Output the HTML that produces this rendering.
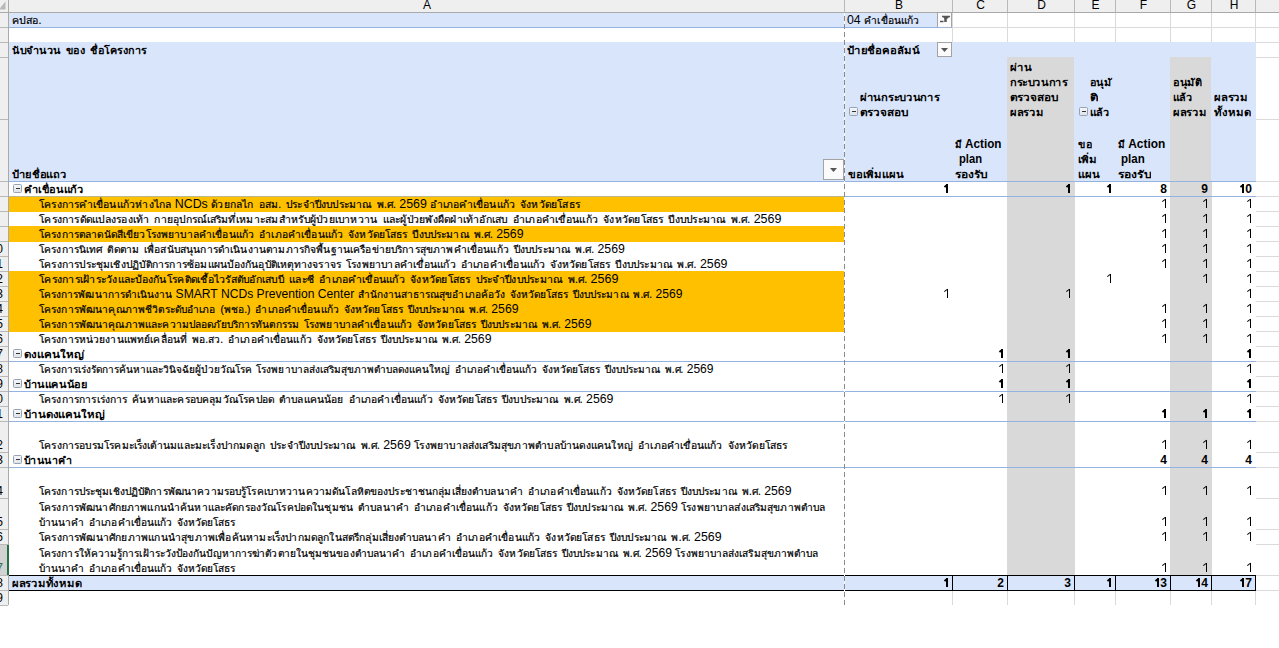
<!DOCTYPE html><html><head><meta charset="utf-8"><style>
*{margin:0;padding:0}
html,body{width:1279px;height:648px;overflow:hidden;background:#fff}
body{position:relative;font-family:"Liberation Sans",sans-serif;color:#000}
.r{position:absolute}
.t{position:absolute;white-space:nowrap;line-height:15px;font-size:12px;transform-origin:0 0}
.t.b{font-weight:bold}
.th{-webkit-text-stroke:0.2px #000;word-spacing:2px}
.b .th{-webkit-text-stroke:0}
.la{font-size:12px}
.ch{font-size:12px}
.rn{font-size:12px;text-align:right;line-height:15px}
.o{color:transparent;position:relative}
.o:before{content:"";position:absolute;left:4.4px;top:2px;width:1.2px;height:9px;background:#000}
.o:after{content:"";position:absolute;left:1.6px;top:3.2px;width:3.6px;height:1.1px;background:#000;transform:rotate(-36deg);transform-origin:50% 50%}
.b .o:before{left:3.7px;width:2px}
.b .o:after{left:1.3px;top:3.4px;width:3.4px;height:1.7px}
.mb{width:7px;height:7px;border:1px solid #97a3b3;border-radius:1.5px;background:linear-gradient(#f4f6f9,#dfe4ea)}
.mb:after{content:"";position:absolute;left:1.5px;top:3px;width:4px;height:1px;background:#333}
</style></head><body><div class="r" style="left:9px;top:27px;width:1270px;height:1px;background:#dadada;"></div>
<div class="r" style="left:9px;top:42px;width:1270px;height:1px;background:#dadada;"></div>
<div class="r" style="left:9px;top:57px;width:1270px;height:1px;background:#dadada;"></div>
<div class="r" style="left:9px;top:119px;width:1270px;height:1px;background:#dadada;"></div>
<div class="r" style="left:9px;top:181px;width:1270px;height:1px;background:#dadada;"></div>
<div class="r" style="left:9px;top:196px;width:1270px;height:1px;background:#dadada;"></div>
<div class="r" style="left:9px;top:211px;width:1270px;height:1px;background:#dadada;"></div>
<div class="r" style="left:9px;top:226px;width:1270px;height:1px;background:#dadada;"></div>
<div class="r" style="left:9px;top:241px;width:1270px;height:1px;background:#dadada;"></div>
<div class="r" style="left:9px;top:256px;width:1270px;height:1px;background:#dadada;"></div>
<div class="r" style="left:9px;top:271px;width:1270px;height:1px;background:#dadada;"></div>
<div class="r" style="left:9px;top:286px;width:1270px;height:1px;background:#dadada;"></div>
<div class="r" style="left:9px;top:301px;width:1270px;height:1px;background:#dadada;"></div>
<div class="r" style="left:9px;top:316px;width:1270px;height:1px;background:#dadada;"></div>
<div class="r" style="left:9px;top:331px;width:1270px;height:1px;background:#dadada;"></div>
<div class="r" style="left:9px;top:346px;width:1270px;height:1px;background:#dadada;"></div>
<div class="r" style="left:9px;top:361px;width:1270px;height:1px;background:#dadada;"></div>
<div class="r" style="left:9px;top:376px;width:1270px;height:1px;background:#dadada;"></div>
<div class="r" style="left:9px;top:391px;width:1270px;height:1px;background:#dadada;"></div>
<div class="r" style="left:9px;top:406px;width:1270px;height:1px;background:#dadada;"></div>
<div class="r" style="left:9px;top:421px;width:1270px;height:1px;background:#dadada;"></div>
<div class="r" style="left:9px;top:452px;width:1270px;height:1px;background:#dadada;"></div>
<div class="r" style="left:9px;top:467px;width:1270px;height:1px;background:#dadada;"></div>
<div class="r" style="left:9px;top:498px;width:1270px;height:1px;background:#dadada;"></div>
<div class="r" style="left:9px;top:529px;width:1270px;height:1px;background:#dadada;"></div>
<div class="r" style="left:9px;top:544px;width:1270px;height:1px;background:#dadada;"></div>
<div class="r" style="left:9px;top:575px;width:1270px;height:1px;background:#dadada;"></div>
<div class="r" style="left:9px;top:590px;width:1270px;height:1px;background:#dadada;"></div>
<div class="r" style="left:844px;top:13px;width:1px;height:592px;background:#dadada;"></div>
<div class="r" style="left:952px;top:13px;width:1px;height:592px;background:#dadada;"></div>
<div class="r" style="left:1007px;top:13px;width:1px;height:592px;background:#dadada;"></div>
<div class="r" style="left:1074px;top:13px;width:1px;height:592px;background:#dadada;"></div>
<div class="r" style="left:1115px;top:13px;width:1px;height:592px;background:#dadada;"></div>
<div class="r" style="left:1170px;top:13px;width:1px;height:592px;background:#dadada;"></div>
<div class="r" style="left:1211px;top:13px;width:1px;height:592px;background:#dadada;"></div>
<div class="r" style="left:1255px;top:13px;width:1px;height:592px;background:#dadada;"></div>
<div class="r" style="left:9px;top:182px;width:1247px;height:393px;background:#ffffff;"></div>
<div class="r" style="left:9px;top:13px;width:943px;height:14px;background:#d9e5fb;"></div>
<div class="r" style="left:9px;top:27px;width:943px;height:1px;background:#95b3e0;"></div>
<div class="r" style="left:9px;top:42px;width:1247px;height:139px;background:#d9e5fb;"></div>
<div class="r" style="left:9px;top:196px;width:835px;height:16px;background:#ffc000;"></div>
<div class="r" style="left:9px;top:226px;width:835px;height:16px;background:#ffc000;"></div>
<div class="r" style="left:9px;top:271px;width:835px;height:16px;background:#ffc000;"></div>
<div class="r" style="left:9px;top:286px;width:835px;height:16px;background:#ffc000;"></div>
<div class="r" style="left:9px;top:301px;width:835px;height:16px;background:#ffc000;"></div>
<div class="r" style="left:9px;top:316px;width:835px;height:16px;background:#ffc000;"></div>
<div class="r" style="left:1007px;top:57px;width:67px;height:124px;background:#d9d9d9;"></div>
<div class="r" style="left:1170px;top:57px;width:41px;height:124px;background:#d9d9d9;"></div>
<div class="r" style="left:1007px;top:181px;width:68px;height:394px;background:#d9d9d9;"></div>
<div class="r" style="left:1170px;top:181px;width:42px;height:394px;background:#d9d9d9;"></div>
<div class="r" style="left:9px;top:181px;width:1247px;height:1px;background:#95b3e0;"></div>
<div class="r" style="left:9px;top:196px;width:1247px;height:1px;background:#95b3e0;"></div>
<div class="r" style="left:9px;top:361px;width:1247px;height:1px;background:#95b3e0;"></div>
<div class="r" style="left:9px;top:391px;width:1247px;height:1px;background:#95b3e0;"></div>
<div class="r" style="left:9px;top:421px;width:1247px;height:1px;background:#95b3e0;"></div>
<div class="r" style="left:9px;top:467px;width:1247px;height:1px;background:#95b3e0;"></div>
<div class="r" style="left:9px;top:196px;width:835px;height:1px;background:#bdb78a;"></div>
<div class="r" style="left:9px;top:576px;width:1247px;height:14px;background:#d9e5fb;"></div>
<div class="r" style="left:9px;top:575px;width:1247px;height:1px;background:#000;"></div>
<div class="r" style="left:9px;top:590px;width:1247px;height:1px;background:#000;"></div>
<div class="r" style="left:952px;top:575px;width:1px;height:16px;background:#000;"></div>
<div class="r" style="left:1007px;top:575px;width:1px;height:16px;background:#000;"></div>
<div class="r" style="left:1074px;top:575px;width:1px;height:16px;background:#000;"></div>
<div class="r" style="left:1115px;top:575px;width:1px;height:16px;background:#000;"></div>
<div class="r" style="left:1170px;top:575px;width:1px;height:16px;background:#000;"></div>
<div class="r" style="left:1211px;top:575px;width:1px;height:16px;background:#000;"></div>
<div class="r" style="left:1255px;top:575px;width:1px;height:16px;background:#000;"></div>
<div class="r" style="left:844px;top:13px;width:1px;height:592px;background:repeating-linear-gradient(to bottom,#8a8a8a 0,#8a8a8a 5px,#fff 5px,#fff 8px);background-position:0 3px"></div>
<div class="r" style="left:0px;top:0px;width:1279px;height:12px;background:#efefef;"></div>
<svg class="r" style="left:0;top:0" width="8" height="12"><path d="M5.5 1.5V9.5H-1z" fill="#b9b9b9"/></svg>
<div class="r" style="left:0px;top:12px;width:1279px;height:1px;background:#a9a9a9;"></div>
<div class="r" style="left:0px;top:13px;width:8px;height:592px;background:#efefef;"></div>
<div class="r" style="left:8px;top:0px;width:1px;height:605px;background:#a9a9a9;"></div>
<div class="r" style="left:844px;top:0px;width:1px;height:12px;background:#b9b9b9;"></div>
<div class="r" style="left:952px;top:0px;width:1px;height:12px;background:#b9b9b9;"></div>
<div class="r" style="left:1007px;top:0px;width:1px;height:12px;background:#b9b9b9;"></div>
<div class="r" style="left:1074px;top:0px;width:1px;height:12px;background:#b9b9b9;"></div>
<div class="r" style="left:1115px;top:0px;width:1px;height:12px;background:#b9b9b9;"></div>
<div class="r" style="left:1170px;top:0px;width:1px;height:12px;background:#b9b9b9;"></div>
<div class="r" style="left:1211px;top:0px;width:1px;height:12px;background:#b9b9b9;"></div>
<div class="r" style="left:1255px;top:0px;width:1px;height:12px;background:#b9b9b9;"></div>
<div class="r" style="left:0px;top:27px;width:8px;height:1px;background:#b9b9b9;"></div>
<div class="r" style="left:0px;top:42px;width:8px;height:1px;background:#b9b9b9;"></div>
<div class="r" style="left:0px;top:57px;width:8px;height:1px;background:#b9b9b9;"></div>
<div class="r" style="left:0px;top:119px;width:8px;height:1px;background:#b9b9b9;"></div>
<div class="r" style="left:0px;top:181px;width:8px;height:1px;background:#b9b9b9;"></div>
<div class="r" style="left:0px;top:196px;width:8px;height:1px;background:#b9b9b9;"></div>
<div class="r" style="left:0px;top:211px;width:8px;height:1px;background:#b9b9b9;"></div>
<div class="r" style="left:0px;top:226px;width:8px;height:1px;background:#b9b9b9;"></div>
<div class="r" style="left:0px;top:241px;width:8px;height:1px;background:#b9b9b9;"></div>
<div class="r" style="left:0px;top:256px;width:8px;height:1px;background:#b9b9b9;"></div>
<div class="r" style="left:0px;top:271px;width:8px;height:1px;background:#b9b9b9;"></div>
<div class="r" style="left:0px;top:286px;width:8px;height:1px;background:#b9b9b9;"></div>
<div class="r" style="left:0px;top:301px;width:8px;height:1px;background:#b9b9b9;"></div>
<div class="r" style="left:0px;top:316px;width:8px;height:1px;background:#b9b9b9;"></div>
<div class="r" style="left:0px;top:331px;width:8px;height:1px;background:#b9b9b9;"></div>
<div class="r" style="left:0px;top:346px;width:8px;height:1px;background:#b9b9b9;"></div>
<div class="r" style="left:0px;top:361px;width:8px;height:1px;background:#b9b9b9;"></div>
<div class="r" style="left:0px;top:376px;width:8px;height:1px;background:#b9b9b9;"></div>
<div class="r" style="left:0px;top:391px;width:8px;height:1px;background:#b9b9b9;"></div>
<div class="r" style="left:0px;top:406px;width:8px;height:1px;background:#b9b9b9;"></div>
<div class="r" style="left:0px;top:421px;width:8px;height:1px;background:#b9b9b9;"></div>
<div class="r" style="left:0px;top:452px;width:8px;height:1px;background:#b9b9b9;"></div>
<div class="r" style="left:0px;top:467px;width:8px;height:1px;background:#b9b9b9;"></div>
<div class="r" style="left:0px;top:498px;width:8px;height:1px;background:#b9b9b9;"></div>
<div class="r" style="left:0px;top:529px;width:8px;height:1px;background:#b9b9b9;"></div>
<div class="r" style="left:0px;top:544px;width:8px;height:1px;background:#b9b9b9;"></div>
<div class="r" style="left:0px;top:575px;width:8px;height:1px;background:#b9b9b9;"></div>
<div class="r" style="left:0px;top:590px;width:8px;height:1px;background:#b9b9b9;"></div>
<div class="r" style="left:0px;top:605px;width:8px;height:1px;background:#b9b9b9;"></div>
<div class="r" style="left:0px;top:545px;width:7px;height:30px;background:#d2d2d2;"></div>
<div class="r" style="left:7px;top:545px;width:2px;height:30px;background:#217346;"></div>
<div class="t ch" style="left:407.0px;top:-2px;width:40px;text-align:center">A</div>
<div class="t ch" style="left:879.0px;top:-2px;width:40px;text-align:center">B</div>
<div class="t ch" style="left:960.5px;top:-2px;width:40px;text-align:center">C</div>
<div class="t ch" style="left:1021.5px;top:-2px;width:40px;text-align:center">D</div>
<div class="t ch" style="left:1075.5px;top:-2px;width:40px;text-align:center">E</div>
<div class="t ch" style="left:1123.5px;top:-2px;width:40px;text-align:center">F</div>
<div class="t ch" style="left:1171.5px;top:-2px;width:40px;text-align:center">G</div>
<div class="t ch" style="left:1214.0px;top:-2px;width:40px;text-align:center">H</div>
<div class="t rn" style="right:1276px;top:242px;color:#000">10</div>
<div class="t rn" style="right:1276px;top:257px;color:#000">11</div>
<div class="t rn" style="right:1276px;top:272px;color:#000">12</div>
<div class="t rn" style="right:1276px;top:287px;color:#000">13</div>
<div class="t rn" style="right:1276px;top:302px;color:#000">14</div>
<div class="t rn" style="right:1276px;top:317px;color:#000">15</div>
<div class="t rn" style="right:1276px;top:332px;color:#000">16</div>
<div class="t rn" style="right:1276px;top:347px;color:#000">17</div>
<div class="t rn" style="right:1276px;top:362px;color:#000">18</div>
<div class="t rn" style="right:1276px;top:377px;color:#000">19</div>
<div class="t rn" style="right:1276px;top:392px;color:#000">20</div>
<div class="t rn" style="right:1276px;top:407px;color:#000">21</div>
<div class="t rn" style="right:1276px;top:438px;color:#000">22</div>
<div class="t rn" style="right:1276px;top:453px;color:#000">23</div>
<div class="t rn" style="right:1276px;top:484px;color:#000">24</div>
<div class="t rn" style="right:1276px;top:515px;color:#000">25</div>
<div class="t rn" style="right:1276px;top:530px;color:#000">26</div>
<div class="t rn" style="right:1276px;top:561px;color:#217346">27</div>
<div class="t rn" style="right:1276px;top:576px;color:#000">28</div>
<div class="t rn" style="right:1276px;top:591px;color:#000">29</div>
<div class="r" style="left:937px;top:12px;width:13px;height:14px;border:1px solid #a3a3a3;background:#fbfbfb"></div>
<svg class="r" style="left:937px;top:12px" width="15" height="16"><path d="M5 4.5h8M8 5v5M9 5v5M3 9.5h3.5" stroke="#555" stroke-width="1.5" fill="none"/><path d="M6 5h6l-2 2h-2z" fill="#555"/></svg>
<div class="r" style="left:937px;top:27px;width:15px;height:1px;background:#9fb3d3;"></div>
<div class="r" style="left:937px;top:42px;width:13px;height:13px;border:1px solid #a3a3a3;background:#fbfbfb"></div>
<svg class="r" style="left:937px;top:42px" width="15" height="15"><path d="M4.0 6.0h7l-3.5 4z" fill="#555"/></svg>
<div class="r" style="left:823px;top:159px;width:19px;height:19px;border:1px solid #a3a3a3;background:#fbfbfb"></div>
<svg class="r" style="left:823px;top:159px" width="21" height="21"><path d="M7.0 9.0h7l-3.5 4z" fill="#555"/></svg>
<div class="t" style="left:12px;top:13px;font-size:12px;transform:scaleX(1.0619);"><span class="th" style="font-size:10px">คปสอ.</span></div>
<div class="t" style="left:847px;top:13px;font-size:12px;transform:scaleX(1.0256);"><span class="la">04 </span><span class="th" style="font-size:10px">คำเขื่อนแก้ว</span></div>
<div class="t b" style="left:12px;top:43px;font-size:12px;transform:scaleX(1.0798);"><span class="th" style="font-size:10px">นับจำนวน ของ ชื่อโครงการ</span></div>
<div class="t b" style="left:847px;top:43px;font-size:12px;transform:scaleX(1.1328);"><span class="th" style="font-size:10px">ป้ายชื่อคอลัมน์</span></div>
<div class="t b" style="left:860px;top:90px;font-size:12px;transform:scaleX(1.1197);"><span class="th" style="font-size:10px">ผ่านกระบวนการ</span></div>
<div class="r mb" style="left:849px;top:107px"></div>
<div class="t b" style="left:860px;top:105px;font-size:12px;transform:scaleX(1.1829);"><span class="th" style="font-size:10px">ตรวจสอบ</span></div>
<div class="t b" style="left:1010px;top:60px;font-size:12px;transform:scaleX(1.1316);"><span class="th" style="font-size:10px">ผ่าน</span></div>
<div class="t b" style="left:1010px;top:75px;font-size:12px;transform:scaleX(1.1058);"><span class="th" style="font-size:10px">กระบวนการ</span></div>
<div class="t b" style="left:1010px;top:90px;font-size:12px;transform:scaleX(1.1829);"><span class="th" style="font-size:10px">ตรวจสอบ</span></div>
<div class="t b" style="left:1010px;top:105px;font-size:12px;transform:scaleX(1.1167);"><span class="th" style="font-size:10px">ผลรวม</span></div>
<div class="t b" style="left:1090px;top:75px;font-size:12px;transform:scaleX(1.0750);"><span class="th" style="font-size:10px">อนุมั</span></div>
<div class="t b" style="left:1090px;top:90px;font-size:12px;transform:scaleX(1.3333);"><span class="th" style="font-size:10px">ติ</span></div>
<div class="r mb" style="left:1079px;top:107px"></div>
<div class="t b" style="left:1090px;top:105px;font-size:12px;transform:scaleX(1.0833);"><span class="th" style="font-size:10px">แล้ว</span></div>
<div class="t b" style="left:1173px;top:75px;font-size:12px;transform:scaleX(1.0962);"><span class="th" style="font-size:10px">อนุมัติ</span></div>
<div class="t b" style="left:1173px;top:90px;font-size:12px;transform:scaleX(1.0833);"><span class="th" style="font-size:10px">แล้ว</span></div>
<div class="t b" style="left:1173px;top:105px;font-size:12px;transform:scaleX(1.1167);"><span class="th" style="font-size:10px">ผลรวม</span></div>
<div class="t b" style="left:1214px;top:90px;font-size:12px;transform:scaleX(1.1333);"><span class="th" style="font-size:10px">ผลรวม</span></div>
<div class="t b" style="left:1214px;top:105px;font-size:12px;transform:scaleX(1.1406);"><span class="th" style="font-size:10px">ทั้งหมด</span></div>
<div class="t b" style="left:12px;top:167px;font-size:12px;transform:scaleX(1.1122);"><span class="th" style="font-size:10px">ป้ายชื่อแถว</span></div>
<div class="t b" style="left:848px;top:167px;font-size:12px;transform:scaleX(1.1327);"><span class="th" style="font-size:10px">ขอเพิ่มแผน</span></div>
<div class="t b" style="left:955px;top:137px;font-size:12px;transform:scaleX(0.9754);"><span class="th" style="font-size:10px">มี</span><span class="la"> Action</span></div>
<div class="t b" style="left:958.5px;top:152px;font-size:12px;transform:scaleX(0.9322);"><span class="la">plan</span></div>
<div class="t b" style="left:955px;top:167px;font-size:12px;transform:scaleX(1.2037);"><span class="th" style="font-size:10px">รองรับ</span></div>
<div class="t b" style="left:1117.5px;top:137px;font-size:12px;transform:scaleX(0.9922);"><span class="th" style="font-size:10px">มี</span><span class="la"> Action</span></div>
<div class="t b" style="left:1121.0px;top:152px;font-size:12px;transform:scaleX(0.9606);"><span class="la">plan</span></div>
<div class="t b" style="left:1117.5px;top:167px;font-size:12px;transform:scaleX(1.2148);"><span class="th" style="font-size:10px">รองรับ</span></div>
<div class="t b" style="left:1077.5px;top:137px;font-size:12px;transform:scaleX(1.0769);"><span class="th" style="font-size:10px">ขอ</span></div>
<div class="t b" style="left:1077.5px;top:152px;font-size:12px;transform:scaleX(1.1471);"><span class="th" style="font-size:10px">เพิ่ม</span></div>
<div class="t b" style="left:1077.5px;top:167px;font-size:12px;transform:scaleX(1.1316);"><span class="th" style="font-size:10px">แผน</span></div>
<div class="r mb" style="left:13px;top:184px"></div>
<div class="t b" style="left:24px;top:182px;font-size:12px;transform:scaleX(1.1019);"><span class="th" style="font-size:10px">คำเขื่อนแก้ว</span></div>
<div id="t31" class="t b ra" style="right:330px;top:182px;font-size:12px;"><span class="la"><span class="o">1</span></span></div>
<div id="t32" class="t b ra" style="right:208px;top:182px;font-size:12px;"><span class="la"><span class="o">1</span></span></div>
<div id="t33" class="t b ra" style="right:167px;top:182px;font-size:12px;"><span class="la"><span class="o">1</span></span></div>
<div id="t34" class="t b ra" style="right:112px;top:182px;font-size:12px;"><span class="la">8</span></div>
<div id="t35" class="t b ra" style="right:71px;top:182px;font-size:12px;"><span class="la">9</span></div>
<div id="t36" class="t b ra" style="right:27px;top:182px;font-size:12px;"><span class="la"><span class="o">1</span>0</span></div>
<div class="t" style="left:39px;top:197px;font-size:12px;transform:scaleX(1.0334);"><span class="th" style="font-size:10px">โครงการคำเขื่อนแก้วห่างไกล</span><span class="la"> NCDs </span><span class="th" style="font-size:10px">ด้วยกลไก อสม. ประจำปีงบประมาณ พ.ศ.</span><span class="la"> 2569 </span><span class="th" style="font-size:10px">อำเภอคำเขื่อนแก้ว จังหวัดยโสธร</span></div>
<div id="t38" class="t ra" style="right:112px;top:197px;font-size:12px;"><span class="la"><span class="o">1</span></span></div>
<div id="t39" class="t ra" style="right:71px;top:197px;font-size:12px;"><span class="la"><span class="o">1</span></span></div>
<div id="t40" class="t ra" style="right:27px;top:197px;font-size:12px;"><span class="la"><span class="o">1</span></span></div>
<div class="t" style="left:39px;top:212px;font-size:12px;transform:scaleX(1.0424);"><span class="th" style="font-size:10px">โครงการดัดแปลงรองเท้า กายอุปกรณ์เสริมที่เหมาะสมสำหรับผู้ป่วยเบาหวาน และผู้ป่วยพังผืดฝ่าเท้าอักเสบ อำเภอคำเขื่อนแก้ว จังหวัดยโสธร ปีงบประมาณ พ.ศ.</span><span class="la"> 2569</span></div>
<div id="t42" class="t ra" style="right:112px;top:212px;font-size:12px;"><span class="la"><span class="o">1</span></span></div>
<div id="t43" class="t ra" style="right:71px;top:212px;font-size:12px;"><span class="la"><span class="o">1</span></span></div>
<div id="t44" class="t ra" style="right:27px;top:212px;font-size:12px;"><span class="la"><span class="o">1</span></span></div>
<div class="t" style="left:39px;top:227px;font-size:12px;transform:scaleX(1.0250);"><span class="th" style="font-size:10px">โครงการตลาดนัดสีเขียวโรงพยาบาลคำเขื่อนแก้ว อำเภอคำเขื่อนแก้ว จังหวัดยโสธร ปีงบประมาณ พ.ศ.</span><span class="la"> 2569</span></div>
<div id="t46" class="t ra" style="right:112px;top:227px;font-size:12px;"><span class="la"><span class="o">1</span></span></div>
<div id="t47" class="t ra" style="right:71px;top:227px;font-size:12px;"><span class="la"><span class="o">1</span></span></div>
<div id="t48" class="t ra" style="right:27px;top:227px;font-size:12px;"><span class="la"><span class="o">1</span></span></div>
<div class="t" style="left:39px;top:242px;font-size:12px;transform:scaleX(1.0248);"><span class="th" style="font-size:10px">โครงการนิเทศ ติดตาม เพื่อสนับสนุนการดำเนินงานตามภารกิจพื้นฐานเครือข่ายบริการสุขภาพคำเขื่อนแก้ว ปีงบประมาณ พ.ศ.</span><span class="la"> 2569</span></div>
<div id="t50" class="t ra" style="right:112px;top:242px;font-size:12px;"><span class="la"><span class="o">1</span></span></div>
<div id="t51" class="t ra" style="right:71px;top:242px;font-size:12px;"><span class="la"><span class="o">1</span></span></div>
<div id="t52" class="t ra" style="right:27px;top:242px;font-size:12px;"><span class="la"><span class="o">1</span></span></div>
<div class="t" style="left:39px;top:257px;font-size:12px;transform:scaleX(1.0346);"><span class="th" style="font-size:10px">โครงการประชุมเชิงปฏิบัติการการซ้อมแผนป้องกันอุบัติเหตุทางจราจร โรงพยาบาลคำเขื่อนแก้ว อำเภอคำเขื่อนแก้ว จังหวัดยโสธร ปีงบประมาณ พ.ศ.</span><span class="la"> 2569</span></div>
<div id="t54" class="t ra" style="right:112px;top:257px;font-size:12px;"><span class="la"><span class="o">1</span></span></div>
<div id="t55" class="t ra" style="right:71px;top:257px;font-size:12px;"><span class="la"><span class="o">1</span></span></div>
<div id="t56" class="t ra" style="right:27px;top:257px;font-size:12px;"><span class="la"><span class="o">1</span></span></div>
<div class="t" style="left:39px;top:272px;font-size:12px;transform:scaleX(1.0470);"><span class="th" style="font-size:10px">โครงการเฝ้าระวังและป้องกันโรคติดเชื้อไวรัสตับอักเสบบี และซี อำเภอคำเขื่อนแก้ว จังหวัดยโสธร ประจำปีงบประมาณ พ.ศ.</span><span class="la"> 2569</span></div>
<div id="t58" class="t ra" style="right:167px;top:272px;font-size:12px;"><span class="la"><span class="o">1</span></span></div>
<div id="t59" class="t ra" style="right:71px;top:272px;font-size:12px;"><span class="la"><span class="o">1</span></span></div>
<div id="t60" class="t ra" style="right:27px;top:272px;font-size:12px;"><span class="la"><span class="o">1</span></span></div>
<div class="t" style="left:39px;top:287px;font-size:12px;transform:scaleX(1.0093);"><span class="th" style="font-size:10px">โครงการพัฒนาการดำเนินงาน</span><span class="la"> SMART NCDs Prevention Center </span><span class="th" style="font-size:10px">สำนักงานสาธารณสุขอำเภอค้อวัง จังหวัดยโสธร ปีงบประมาณ พ.ศ.</span><span class="la"> 2569</span></div>
<div id="t62" class="t ra" style="right:330px;top:287px;font-size:12px;"><span class="la"><span class="o">1</span></span></div>
<div id="t63" class="t ra" style="right:208px;top:287px;font-size:12px;"><span class="la"><span class="o">1</span></span></div>
<div id="t64" class="t ra" style="right:27px;top:287px;font-size:12px;"><span class="la"><span class="o">1</span></span></div>
<div class="t" style="left:39px;top:302px;font-size:12px;transform:scaleX(1.0204);"><span class="th" style="font-size:10px">โครงการพัฒนาคุณภาพชีวิตระดับอำเภอ (พชอ.) อำเภอคำเขื่อนแก้ว จังหวัดยโสธร ปีงบประมาณ พ.ศ.</span><span class="la"> 2569</span></div>
<div id="t66" class="t ra" style="right:112px;top:302px;font-size:12px;"><span class="la"><span class="o">1</span></span></div>
<div id="t67" class="t ra" style="right:71px;top:302px;font-size:12px;"><span class="la"><span class="o">1</span></span></div>
<div id="t68" class="t ra" style="right:27px;top:302px;font-size:12px;"><span class="la"><span class="o">1</span></span></div>
<div class="t" style="left:39px;top:317px;font-size:12px;transform:scaleX(1.0199);"><span class="th" style="font-size:10px">โครงการพัฒนาคุณภาพและความปลอดภัยบริการทันตกรรม โรงพยาบาลคำเขื่อนแก้ว จังหวัดยโสธร ปีงบประมาณ พ.ศ.</span><span class="la"> 2569</span></div>
<div id="t70" class="t ra" style="right:112px;top:317px;font-size:12px;"><span class="la"><span class="o">1</span></span></div>
<div id="t71" class="t ra" style="right:71px;top:317px;font-size:12px;"><span class="la"><span class="o">1</span></span></div>
<div id="t72" class="t ra" style="right:27px;top:317px;font-size:12px;"><span class="la"><span class="o">1</span></span></div>
<div class="t" style="left:39px;top:332px;font-size:12px;transform:scaleX(1.0213);"><span class="th" style="font-size:10px">โครงการหน่วยงานแพทย์เคลื่อนที่ พอ.สว. อำเภอคำเขื่อนแก้ว จังหวัดยโสธร ปีงบประมาณ พ.ศ.</span><span class="la"> 2569</span></div>
<div id="t74" class="t ra" style="right:112px;top:332px;font-size:12px;"><span class="la"><span class="o">1</span></span></div>
<div id="t75" class="t ra" style="right:71px;top:332px;font-size:12px;"><span class="la"><span class="o">1</span></span></div>
<div id="t76" class="t ra" style="right:27px;top:332px;font-size:12px;"><span class="la"><span class="o">1</span></span></div>
<div class="r mb" style="left:13px;top:349px"></div>
<div class="t b" style="left:24px;top:347px;font-size:12px;transform:scaleX(1.1635);"><span class="th" style="font-size:10px">ดงแคนใหญ่</span></div>
<div id="t78" class="t b ra" style="right:275px;top:347px;font-size:12px;"><span class="la"><span class="o">1</span></span></div>
<div id="t79" class="t b ra" style="right:208px;top:347px;font-size:12px;"><span class="la"><span class="o">1</span></span></div>
<div id="t80" class="t b ra" style="right:27px;top:347px;font-size:12px;"><span class="la"><span class="o">1</span></span></div>
<div class="t" style="left:39px;top:362px;font-size:12px;transform:scaleX(1.0030);"><span class="th" style="font-size:10px">โครงการเร่งรัดการค้นหาและวินิจฉัยผู้ป่วยวัณโรค โรงพยาบาลส่งเสริมสุขภาพตำบลดงแคนใหญ่ อำเภอคำเขื่อนแก้ว จังหวัดยโสธร ปีงบประมาณ พ.ศ.</span><span class="la"> 2569</span></div>
<div id="t82" class="t ra" style="right:275px;top:362px;font-size:12px;"><span class="la"><span class="o">1</span></span></div>
<div id="t83" class="t ra" style="right:208px;top:362px;font-size:12px;"><span class="la"><span class="o">1</span></span></div>
<div id="t84" class="t ra" style="right:27px;top:362px;font-size:12px;"><span class="la"><span class="o">1</span></span></div>
<div class="r mb" style="left:13px;top:379px"></div>
<div class="t b" style="left:24px;top:377px;font-size:12px;transform:scaleX(1.0948);"><span class="th" style="font-size:10px">บ้านแคนน้อย</span></div>
<div id="t86" class="t b ra" style="right:275px;top:377px;font-size:12px;"><span class="la"><span class="o">1</span></span></div>
<div id="t87" class="t b ra" style="right:208px;top:377px;font-size:12px;"><span class="la"><span class="o">1</span></span></div>
<div id="t88" class="t b ra" style="right:27px;top:377px;font-size:12px;"><span class="la"><span class="o">1</span></span></div>
<div class="t" style="left:39px;top:392px;font-size:12px;transform:scaleX(1.0272);"><span class="th" style="font-size:10px">โครงการการเร่งการ ค้นหาและครอบคลุมวัณโรคปอด ตำบลแคนน้อย อำเภอคำเขื่อนแก้ว จังหวัดยโสธร ปีงบประมาณ พ.ศ.</span><span class="la"> 2569</span></div>
<div id="t90" class="t ra" style="right:275px;top:392px;font-size:12px;"><span class="la"><span class="o">1</span></span></div>
<div id="t91" class="t ra" style="right:208px;top:392px;font-size:12px;"><span class="la"><span class="o">1</span></span></div>
<div id="t92" class="t ra" style="right:27px;top:392px;font-size:12px;"><span class="la"><span class="o">1</span></span></div>
<div class="r mb" style="left:13px;top:409px"></div>
<div class="t b" style="left:24px;top:407px;font-size:12px;transform:scaleX(1.1408);"><span class="th" style="font-size:10px">บ้านดงแคนใหญ่</span></div>
<div id="t94" class="t b ra" style="right:112px;top:407px;font-size:12px;"><span class="la"><span class="o">1</span></span></div>
<div id="t95" class="t b ra" style="right:71px;top:407px;font-size:12px;"><span class="la"><span class="o">1</span></span></div>
<div id="t96" class="t b ra" style="right:27px;top:407px;font-size:12px;"><span class="la"><span class="o">1</span></span></div>
<div class="t" style="left:39px;top:438px;font-size:12px;transform:scaleX(1.0323);"><span class="th" style="font-size:10px">โครงการอบรมโรคมะเร็งเต้านมและมะเร็งปากมดลูก ประจำปีงบประมาณ พ.ศ.</span><span class="la"> 2569 </span><span class="th" style="font-size:10px">โรงพยาบาลส่งเสริมสุขภาพตำบลบ้านดงแคนใหญ่ อำเภอคำเขื่อนแก้ว จังหวัดยโสธร</span></div>
<div id="t98" class="t ra" style="right:112px;top:438px;font-size:12px;"><span class="la"><span class="o">1</span></span></div>
<div id="t99" class="t ra" style="right:71px;top:438px;font-size:12px;"><span class="la"><span class="o">1</span></span></div>
<div id="t100" class="t ra" style="right:27px;top:438px;font-size:12px;"><span class="la"><span class="o">1</span></span></div>
<div class="r mb" style="left:13px;top:455px"></div>
<div class="t b" style="left:24px;top:453px;font-size:12px;transform:scaleX(1.0667);"><span class="th" style="font-size:10px">บ้านนาคำ</span></div>
<div id="t102" class="t b ra" style="right:112px;top:453px;font-size:12px;"><span class="la">4</span></div>
<div id="t103" class="t b ra" style="right:71px;top:453px;font-size:12px;"><span class="la">4</span></div>
<div id="t104" class="t b ra" style="right:27px;top:453px;font-size:12px;"><span class="la">4</span></div>
<div class="t" style="left:39px;top:484px;font-size:12px;transform:scaleX(1.0214);"><span class="th" style="font-size:10px">โครงการประชุมเชิงปฏิบัติการพัฒนาความรอบรู้โรคเบาหวานความดันโลหิตของประชาชนกลุ่มเสี่ยงตำบลนาคำ อำเภอคำเขื่อนแก้ว จังหวัดยโสธร ปีงบประมาณ พ.ศ.</span><span class="la"> 2569</span></div>
<div id="t106" class="t ra" style="right:112px;top:484px;font-size:12px;"><span class="la"><span class="o">1</span></span></div>
<div id="t107" class="t ra" style="right:71px;top:484px;font-size:12px;"><span class="la"><span class="o">1</span></span></div>
<div id="t108" class="t ra" style="right:27px;top:484px;font-size:12px;"><span class="la"><span class="o">1</span></span></div>
<div class="t" style="left:39px;top:500px;font-size:12px;transform:scaleX(1.0230);"><span class="th" style="font-size:10px">โครงการพัฒนาศักยภาพแกนนำค้นหาและคัดกรองวัณโรคปอดในชุมชน ตำบลนาคำ อำเภอคำเขื่อนแก้ว จังหวัดยโสธร ปีงบประมาณ พ.ศ.</span><span class="la"> 2569 </span><span class="th" style="font-size:10px">โรงพยาบาลส่งเสริมสุขภาพตำบล</span></div>
<div class="t" style="left:39px;top:515px;font-size:12px;transform:scaleX(1.0100);"><span class="th" style="font-size:10px">บ้านนาคำ อำเภอคำเขื่อนแก้ว จังหวัดยโสธร</span></div>
<div id="t111" class="t ra" style="right:112px;top:515px;font-size:12px;"><span class="la"><span class="o">1</span></span></div>
<div id="t112" class="t ra" style="right:71px;top:515px;font-size:12px;"><span class="la"><span class="o">1</span></span></div>
<div id="t113" class="t ra" style="right:27px;top:515px;font-size:12px;"><span class="la"><span class="o">1</span></span></div>
<div class="t" style="left:39px;top:530px;font-size:12px;transform:scaleX(1.0299);"><span class="th" style="font-size:10px">โครงการพัฒนาศักยภาพแกนนำสุขภาพเพื่อค้นหามะเร็งปากมดลูกในสตรีกลุ่มเสี่ยงตำบลนาคำ อำเภอคำเขื่อนแก้ว จังหวัดยโสธร ปีงบประมาณ พ.ศ.</span><span class="la"> 2569</span></div>
<div id="t115" class="t ra" style="right:112px;top:530px;font-size:12px;"><span class="la"><span class="o">1</span></span></div>
<div id="t116" class="t ra" style="right:71px;top:530px;font-size:12px;"><span class="la"><span class="o">1</span></span></div>
<div id="t117" class="t ra" style="right:27px;top:530px;font-size:12px;"><span class="la"><span class="o">1</span></span></div>
<div class="t" style="left:39px;top:546px;font-size:12px;transform:scaleX(1.0149);"><span class="th" style="font-size:10px">โครงการให้ความรู้การเฝ้าระวังป้องกันปัญหาการฆ่าตัวตายในชุมชนของตำบลนาคำ อำเภอคำเขื่อนแก้ว จังหวัดยโสธร ปีงบประมาณ พ.ศ.</span><span class="la"> 2569 </span><span class="th" style="font-size:10px">โรงพยาบาลส่งเสริมสุขภาพตำบล</span></div>
<div class="t" style="left:39px;top:561px;font-size:12px;transform:scaleX(1.0100);"><span class="th" style="font-size:10px">บ้านนาคำ อำเภอคำเขื่อนแก้ว จังหวัดยโสธร</span></div>
<div id="t120" class="t ra" style="right:112px;top:561px;font-size:12px;"><span class="la"><span class="o">1</span></span></div>
<div id="t121" class="t ra" style="right:71px;top:561px;font-size:12px;"><span class="la"><span class="o">1</span></span></div>
<div id="t122" class="t ra" style="right:27px;top:561px;font-size:12px;"><span class="la"><span class="o">1</span></span></div>
<div class="t b" style="left:12px;top:576px;font-size:12px;transform:scaleX(1.1210);"><span class="th" style="font-size:10px">ผลรวมทั้งหมด</span></div>
<div id="t124" class="t b ra" style="right:330px;top:576px;font-size:12px;"><span class="la"><span class="o">1</span></span></div>
<div id="t125" class="t b ra" style="right:275px;top:576px;font-size:12px;"><span class="la">2</span></div>
<div id="t126" class="t b ra" style="right:208px;top:576px;font-size:12px;"><span class="la">3</span></div>
<div id="t127" class="t b ra" style="right:167px;top:576px;font-size:12px;"><span class="la"><span class="o">1</span></span></div>
<div id="t128" class="t b ra" style="right:112px;top:576px;font-size:12px;"><span class="la"><span class="o">1</span>3</span></div>
<div id="t129" class="t b ra" style="right:71px;top:576px;font-size:12px;"><span class="la"><span class="o">1</span>4</span></div>
<div id="t130" class="t b ra" style="right:27px;top:576px;font-size:12px;"><span class="la"><span class="o">1</span>7</span></div></body></html>
